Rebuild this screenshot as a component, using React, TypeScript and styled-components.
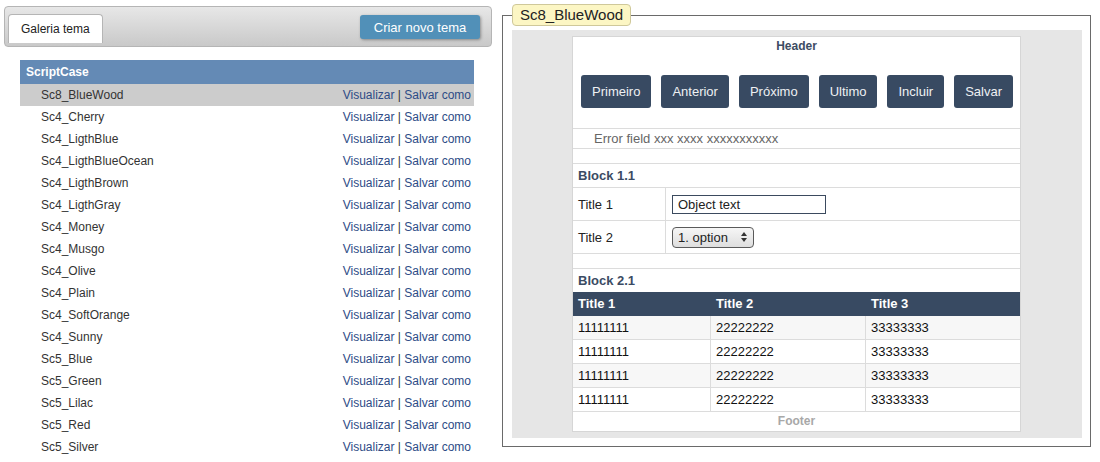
import React from "react";
import styled, { createGlobalStyle } from "styled-components";

const GlobalStyle = createGlobalStyle`
  html, body { margin: 0; padding: 0; background: #fff; }
  body {
    font-family: "Liberation Sans", Arial, Helvetica, sans-serif;
    font-size: 12px;
    color: #333;
  }
`;

const Page = styled.div`
  display: flex;
  align-items: flex-start;
  width: 1100px;
  height: 462px;
  box-sizing: border-box;
  padding: 4px 0 0 4px;
  overflow: hidden;
`;

const LeftColumn = styled.div`
  width: 488px;
  flex-shrink: 0;
  margin-top: 2px;
`;

const Toolbar = styled.div`
  display: flex;
  align-items: flex-start;
  justify-content: space-between;
  height: 41px;
  box-sizing: border-box;
  padding: 7px 11px 0 3px;
  border: 1px solid #b5b5b5;
  border-radius: 4px;
  background: linear-gradient(#e7e7e7, #c9c9c9);
`;

const Tab = styled.div`
  height: 29px;
  box-sizing: border-box;
  padding: 0 12px;
  line-height: 28px;
  background: #fff;
  border: 1px solid #b5b5b5;
  border-bottom: none;
  border-radius: 4px 4px 0 0;
  font-size: 12px;
  color: #222;
`;

const PrimaryButton = styled.button`
  margin-top: 1px;
  width: 120px;
  height: 24px;
  padding: 0;
  border: none;
  border-radius: 3px;
  background: #5190b8;
  color: #fff;
  font: 13px "Liberation Sans", Arial, sans-serif;
  box-shadow: 1px 1px 3px rgba(0, 0, 0, 0.35);
`;

const ThemeList = styled.div`
  width: 454px;
  margin: 13px 0 0 16px;
`;

const ListHeader = styled.div`
  height: 24px;
  line-height: 24px;
  padding-left: 6px;
  background: #648ab5;
  color: #fff;
  font-weight: bold;
  font-size: 12px;
`;

const ThemeRow = styled.div<{ $selected?: boolean }>`
  display: flex;
  align-items: center;
  justify-content: space-between;
  height: 22px;
  padding: 0 3px 0 21px;
  background: ${(p) => (p.$selected ? "#cccccc" : "transparent")};
  color: #333;
  font-size: 12px;
`;

const Actions = styled.span`
  color: #333;
`;

const ActionLink = styled.a`
  color: #2d4b86;
  text-decoration: none;
`;

const PreviewFieldset = styled.fieldset`
  margin: 0 0 0 10px;
  padding: 4px 8px 8px 9px;
  width: 589px;
  min-width: 0;
  box-sizing: border-box;
  border: 1px solid #6a6a6a;
`;

const PreviewLegend = styled.legend`
  height: 22px;
  box-sizing: border-box;
  padding: 0 7px;
  line-height: 20px;
  background: #fcf6c4;
  border: 1px solid #cfc89a;
  border-radius: 4px;
  font-size: 15px;
  color: #222;
`;

const Stage = styled.div`
  background: #e6e6e6;
  padding: 6px 61px 6px 60px;
`;

const Card = styled.div`
  background: #fff;
  border: 1px solid #d6d6d6;
  display: flex;
  flex-direction: column;
`;

const CardHeader = styled.div`
  height: 19px;
  line-height: 19px;
  text-align: center;
  font-weight: bold;
  font-size: 12px;
  color: #3d4c63;
`;

const ButtonBar = styled.div`
  display: flex;
  gap: 10px;
  margin: 19px 0 0 8px;
`;

const NavButton = styled.button`
  height: 33px;
  padding: 0 11px;
  border: none;
  border-radius: 3px;
  background: #384a62;
  color: #eef0f3;
  font: 13px "Liberation Sans", Arial, sans-serif;
`;

const ErrorBox = styled.div`
  margin-top: 20px;
  height: 19px;
  line-height: 19px;
  padding-left: 21px;
  border-top: 1px solid #dcdcdc;
  border-bottom: 1px solid #dcdcdc;
  color: #666;
  font-size: 13px;
`;

const Block = styled.div<{ $gap: number; $closed?: boolean }>`
  margin-top: ${(p) => p.$gap}px;
  border-top: 1px solid #dcdcdc;
  border-bottom: ${(p) => (p.$closed ? "1px solid #dcdcdc" : "none")};
`;

const BlockTitle = styled.div`
  height: 23px;
  line-height: 23px;
  padding-left: 5px;
  font-weight: bold;
  font-size: 13px;
  color: #3b4b63;
`;

const FieldRow = styled.div`
  display: grid;
  grid-template-columns: 93px 1fr;
  height: 32px;
  border-top: 1px solid #dcdcdc;
`;

const FieldLabel = styled.div`
  display: flex;
  align-items: center;
  padding-left: 5px;
  border-right: 1px solid #dcdcdc;
  font-size: 13px;
  color: #222;
`;

const FieldValue = styled.div`
  display: flex;
  align-items: center;
  padding-left: 6px;
`;

const TextInput = styled.div`
  width: 154px;
  height: 19px;
  box-sizing: border-box;
  padding-left: 5px;
  line-height: 17px;
  border: 1px solid #3b4a5e;
  font-size: 13px;
  color: #222;
`;

const SelectBox = styled.div`
  display: flex;
  align-items: center;
  justify-content: space-between;
  width: 82px;
  height: 21px;
  box-sizing: border-box;
  padding: 0 6px 0 5px;
  border: 1px solid #5a5a5a;
  border-radius: 4px;
  background: linear-gradient(#f6f6f6, #dedede);
  font-size: 13px;
  color: #222;
`;

const GridTable = styled.div`
  display: grid;
  grid-template-columns: 138px 155px 1fr;
`;

const HeadCell = styled.div`
  height: 24px;
  line-height: 24px;
  padding-left: 5px;
  background: #384a62;
  color: #fff;
  font-weight: bold;
  font-size: 13px;
`;

const BodyCell = styled.div<{ $alt: boolean; $last: boolean }>`
  height: 23px;
  line-height: 23px;
  padding-left: 5px;
  background: ${(p) => (p.$alt ? "#f7f7f7" : "#fff")};
  border-bottom: 1px solid #dcdcdc;
  border-right: ${(p) => (p.$last ? "none" : "1px solid #dcdcdc")};
  font-size: 13px;
  color: #111;
`;

const CardFooter = styled.div`
  height: 19px;
  line-height: 19px;
  text-align: center;
  font-weight: bold;
  font-size: 12px;
  color: #a8a8a8;
`;

const themes = [
  "Sc8_BlueWood",
  "Sc4_Cherry",
  "Sc4_LigthBlue",
  "Sc4_LigthBlueOcean",
  "Sc4_LigthBrown",
  "Sc4_LigthGray",
  "Sc4_Money",
  "Sc4_Musgo",
  "Sc4_Olive",
  "Sc4_Plain",
  "Sc4_SoftOrange",
  "Sc4_Sunny",
  "Sc5_Blue",
  "Sc5_Green",
  "Sc5_Lilac",
  "Sc5_Red",
  "Sc5_Silver",
];

const navButtons = ["Primeiro", "Anterior", "Próximo", "Ultimo", "Incluir", "Salvar"];

const rows = [0, 1, 2, 3];

const SelectArrows = () => (
  <svg width="6" height="10" viewBox="0 0 6 10">
    <path d="M0 4 L3 0 L6 4 Z" fill="#333" />
    <path d="M0 6 L3 10 L6 6 Z" fill="#333" />
  </svg>
);

export default function App() {
  return (
    <>
      <GlobalStyle />
      <Page>
        <LeftColumn>
          <Toolbar>
            <Tab>Galeria tema</Tab>
            <PrimaryButton>Criar novo tema</PrimaryButton>
          </Toolbar>
          <ThemeList>
            <ListHeader>ScriptCase</ListHeader>
            {themes.map((t, i) => (
              <ThemeRow key={t} $selected={i === 0}>
                <span>{t}</span>
                <Actions>
                  <ActionLink href="#">Visualizar</ActionLink> | <ActionLink href="#">Salvar como</ActionLink>
                </Actions>
              </ThemeRow>
            ))}
          </ThemeList>
        </LeftColumn>

        <PreviewFieldset>
          <PreviewLegend>Sc8_BlueWood</PreviewLegend>
          <Stage>
            <Card>
              <CardHeader>Header</CardHeader>
              <ButtonBar>
                {navButtons.map((b) => (
                  <NavButton key={b}>{b}</NavButton>
                ))}
              </ButtonBar>
              <ErrorBox>Error field xxx xxxx xxxxxxxxxxx</ErrorBox>

              <Block $gap={14} $closed>
                <BlockTitle>Block 1.1</BlockTitle>
                <FieldRow>
                  <FieldLabel>Title 1</FieldLabel>
                  <FieldValue>
                    <TextInput>Object text</TextInput>
                  </FieldValue>
                </FieldRow>
                <FieldRow>
                  <FieldLabel>Title 2</FieldLabel>
                  <FieldValue>
                    <SelectBox>
                      <span>1. option</span>
                      <SelectArrows />
                    </SelectBox>
                  </FieldValue>
                </FieldRow>
              </Block>

              <Block $gap={14}>
                <BlockTitle>Block 2.1</BlockTitle>
                <GridTable>
                  <HeadCell>Title 1</HeadCell>
                  <HeadCell>Title 2</HeadCell>
                  <HeadCell>Title 3</HeadCell>
                  {rows.map((r) => (
                    <React.Fragment key={r}>
                      <BodyCell $alt={r % 2 === 0} $last={false}>11111111</BodyCell>
                      <BodyCell $alt={r % 2 === 0} $last={false}>22222222</BodyCell>
                      <BodyCell $alt={r % 2 === 0} $last={true}>33333333</BodyCell>
                    </React.Fragment>
                  ))}
                </GridTable>
              </Block>
              <CardFooter>Footer</CardFooter>
            </Card>
          </Stage>
        </PreviewFieldset>
      </Page>
    </>
  );
}
